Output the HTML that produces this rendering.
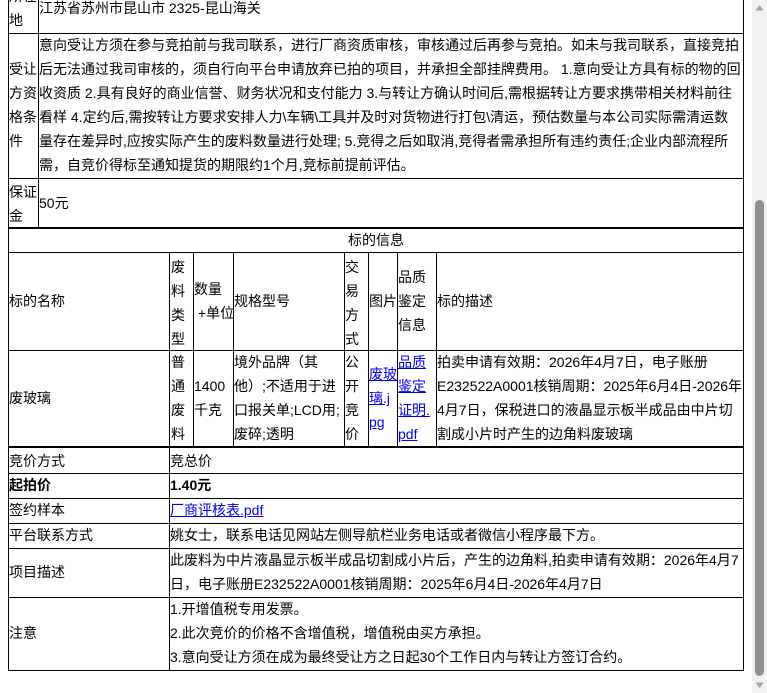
<!DOCTYPE html>
<html><head><meta charset="utf-8">
<style>
html,body{margin:0;padding:0;background:#fff;width:767px;height:693px;overflow:hidden;position:relative;}
.t{position:absolute;white-space:nowrap;line-height:24px;height:24px;font-size:14px;color:#000;font-family:"Liberation Sans","Noto Sans CJK SC",sans-serif;}
.h{position:absolute;height:1px;background:#000;}
.v{position:absolute;width:1px;background:#000;}
a{color:#0000ee;text-decoration:underline;}
b{font-weight:bold;}
.sb{position:absolute;left:752px;top:0;width:15px;height:693px;background:#f1f1f1;}
.th{position:absolute;left:755px;top:200px;width:9px;height:476px;background:#909090;border-radius:5px;}
</style></head><body>
<!-- horizontal lines -->
<div class="h" style="left:8px;width:736px;top:33px"></div>
<div class="h" style="left:8px;width:736px;top:178px"></div>
<div class="h" style="left:8px;width:736px;top:227px;height:2px"></div>
<div class="h" style="left:8px;width:736px;top:252px"></div>
<div class="h" style="left:8px;width:736px;top:350px"></div>
<div class="h" style="left:8px;width:736px;top:446px;height:2px"></div>
<div class="h" style="left:8px;width:736px;top:473px"></div>
<div class="h" style="left:8px;width:736px;top:498px"></div>
<div class="h" style="left:8px;width:736px;top:523px"></div>
<div class="h" style="left:8px;width:736px;top:548px"></div>
<div class="h" style="left:8px;width:736px;top:597px"></div>
<div class="h" style="left:8px;width:736px;top:670px"></div>
<!-- vertical lines -->
<div class="v" style="left:8px;top:0;height:671px"></div>
<div class="v" style="left:743px;top:0;height:671px"></div>
<div class="v" style="left:38px;top:0;height:228px"></div>
<div class="v" style="left:169px;top:252px;height:195px"></div>
<div class="v" style="left:193px;top:252px;height:195px"></div>
<div class="v" style="left:233px;top:252px;height:195px"></div>
<div class="v" style="left:344px;top:252px;height:195px"></div>
<div class="v" style="left:368px;top:252px;height:195px"></div>
<div class="v" style="left:397px;top:252px;height:195px"></div>
<div class="v" style="left:436px;top:252px;height:195px"></div>
<div class="v" style="left:169px;top:448px;height:222px"></div>

<!-- top section -->
<div class="t" style="left:9px;top:-16px">所在</div>
<div class="t" style="left:9px;top:8px">地</div>
<div class="t" style="left:39px;top:-4px">江苏省苏州市昆山市 2325-昆山海关</div>

<div class="t" style="left:9px;top:57px">受让</div>
<div class="t" style="left:9px;top:81px">方资</div>
<div class="t" style="left:9px;top:105px">格条</div>
<div class="t" style="left:9px;top:129px">件</div>
<div class="t" style="left:39px;top:33px">意向受让方须在参与竞拍前与我司联系，进行厂商资质审核，审核通过后再参与竞拍。如未与我司联系，直接竞拍</div>
<div class="t" style="left:39px;top:57px">后无法通过我司审核的，须自行向平台申请放弃已拍的项目，并承担全部挂牌费用。 1.意向受让方具有标的物的回</div>
<div class="t" style="left:39px;top:81px">收资质 2.具有良好的商业信誉、财务状况和支付能力 3.与转让方确认时间后,需根据转让方要求携带相关材料前往</div>
<div class="t" style="left:39px;top:105px">看样 4.定约后,需按转让方要求安排人力\车辆\工具并及时对货物进行打包\清运，预估数量与本公司实际需清运数</div>
<div class="t" style="left:39px;top:129px">量存在差异时,应按实际产生的废料数量进行处理; 5.竞得之后如取消,竞得者需承担所有违约责任;企业内部流程所</div>
<div class="t" style="left:39px;top:153px">需，自竞价得标至通知提货的期限约1个月,竞标前提前评估。</div>

<div class="t" style="left:9px;top:180px">保证</div>
<div class="t" style="left:9px;top:204px">金</div>
<div class="t" style="left:39px;top:191px">50元</div>

<!-- object table -->
<div class="t" style="left:348px;top:228px">标的信息</div>
<div class="t" style="left:9px;top:289px">标的名称</div>
<div class="t" style="left:171px;top:255px">废</div>
<div class="t" style="left:171px;top:279px">料</div>
<div class="t" style="left:171px;top:303px">类</div>
<div class="t" style="left:171px;top:327px">型</div>
<div class="t" style="left:194px;top:277px">数量</div>
<div class="t" style="left:194px;top:301px">&nbsp;+单位</div>
<div class="t" style="left:234px;top:289px">规格型号</div>
<div class="t" style="left:345px;top:255px">交</div>
<div class="t" style="left:345px;top:279px">易</div>
<div class="t" style="left:345px;top:303px">方</div>
<div class="t" style="left:345px;top:327px">式</div>
<div class="t" style="left:369px;top:289px">图片</div>
<div class="t" style="left:398px;top:265px">品质</div>
<div class="t" style="left:398px;top:289px">鉴定</div>
<div class="t" style="left:398px;top:313px">信息</div>
<div class="t" style="left:437px;top:289px">标的描述</div>

<div class="t" style="left:9px;top:386px">废玻璃</div>
<div class="t" style="left:171px;top:350px">普</div>
<div class="t" style="left:171px;top:374px">通</div>
<div class="t" style="left:171px;top:398px">废</div>
<div class="t" style="left:171px;top:422px">料</div>
<div class="t" style="left:194px;top:374px">1400</div>
<div class="t" style="left:194px;top:398px">千克</div>
<div class="t" style="left:234px;top:350px">境外品牌（其</div>
<div class="t" style="left:234px;top:374px">他）;不适用于进</div>
<div class="t" style="left:234px;top:398px">口报关单;LCD用;</div>
<div class="t" style="left:234px;top:422px">废碎;透明</div>
<div class="t" style="left:345px;top:350px">公</div>
<div class="t" style="left:345px;top:374px">开</div>
<div class="t" style="left:345px;top:398px">竞</div>
<div class="t" style="left:345px;top:422px">价</div>
<div class="t" style="left:369px;top:362px"><a>废玻</a></div>
<div class="t" style="left:369px;top:386px"><a>璃.j</a></div>
<div class="t" style="left:369px;top:410px"><a>pg</a></div>
<div class="t" style="left:398px;top:350px"><a>品质</a></div>
<div class="t" style="left:398px;top:374px"><a>鉴定</a></div>
<div class="t" style="left:398px;top:398px"><a>证明.</a></div>
<div class="t" style="left:398px;top:422px"><a>pdf</a></div>
<div class="t" style="left:437px;top:350px">拍卖申请有效期：2026年4月7日，电子账册</div>
<div class="t" style="left:437px;top:374px">E232522A0001核销周期：2025年6月4日-2026年</div>
<div class="t" style="left:437px;top:398px">4月7日，保税进口的液晶显示板半成品由中片切</div>
<div class="t" style="left:437px;top:422px">割成小片时产生的边角料废玻璃</div>

<!-- bottom table -->
<div class="t" style="left:9px;top:449px">竞价方式</div>
<div class="t" style="left:170px;top:449px">竞总价</div>
<div class="t" style="left:9px;top:473px"><b>起拍价</b></div>
<div class="t" style="left:170px;top:473px"><b>1.40元</b></div>
<div class="t" style="left:9px;top:498px">签约样本</div>
<div class="t" style="left:170px;top:498px"><a>厂商评核表.pdf</a></div>
<div class="t" style="left:9px;top:523px">平台联系方式</div>
<div class="t" style="left:170px;top:523px">姚女士，联系电话见网站左侧导航栏业务电话或者微信小程序最下方。</div>
<div class="t" style="left:9px;top:560px">项目描述</div>
<div class="t" style="left:170px;top:548px">此废料为中片液晶显示板半成品切割成小片后，产生的边角料,拍卖申请有效期：2026年4月7</div>
<div class="t" style="left:170px;top:572px">日，电子账册E232522A0001核销周期：2025年6月4日-2026年4月7日</div>
<div class="t" style="left:9px;top:621px">注意</div>
<div class="t" style="left:170px;top:597px">1.开增值税专用发票。</div>
<div class="t" style="left:170px;top:621px">2.此次竞价的价格不含增值税，增值税由买方承担。</div>
<div class="t" style="left:170px;top:645px">3.意向受让方须在成为最终受让方之日起30个工作日内与转让方签订合约。</div>

<!-- scrollbar -->
<div class="sb"></div>
<div class="th"></div>
<svg style="position:absolute;left:754px;top:3px" width="11" height="9"><path d="M1.5 7.5 L5.5 2 L9.5 7.5 Z" fill="#a3a3a3"/></svg>
<svg style="position:absolute;left:754px;top:681px" width="11" height="9"><path d="M1.5 1.5 L5.5 7 L9.5 1.5 Z" fill="#a3a3a3"/></svg>
</body></html>
